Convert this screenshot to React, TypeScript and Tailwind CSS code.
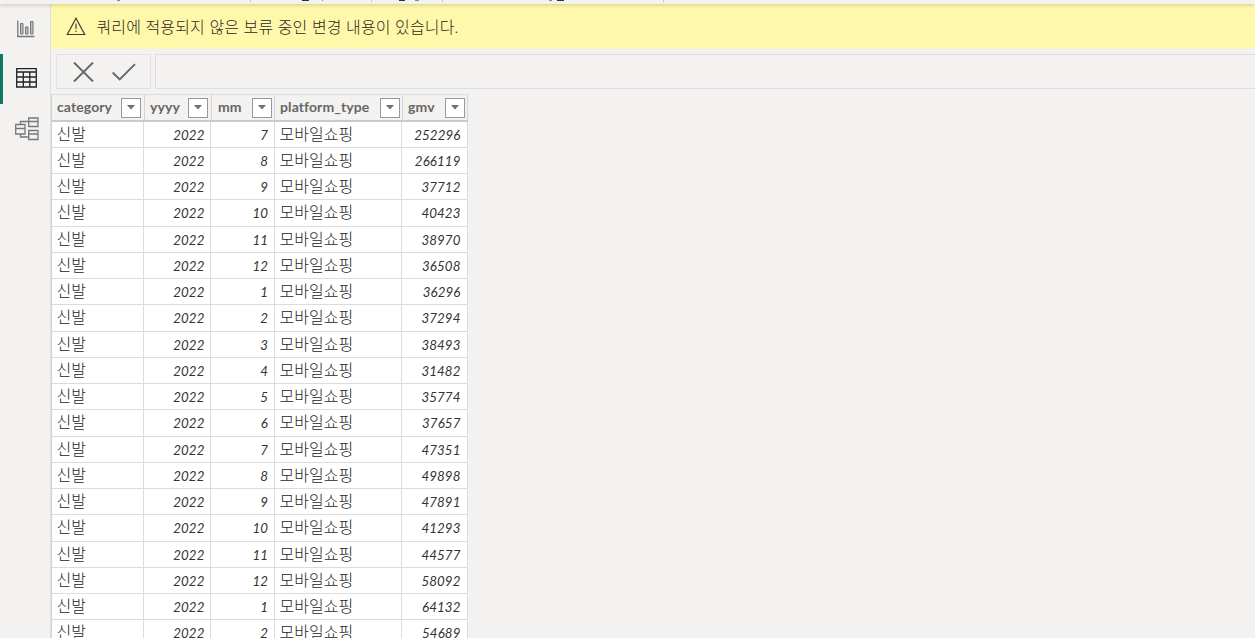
import { useState } from "react";

const ROWS: [number, number][] = [
  [7, 252296],
  [8, 266119],
  [9, 37712],
  [10, 40423],
  [11, 38970],
  [12, 36508],
  [1, 36296],
  [2, 37294],
  [3, 38493],
  [4, 31482],
  [5, 35774],
  [6, 37657],
  [7, 47351],
  [8, 49898],
  [9, 47891],
  [10, 41293],
  [11, 44577],
  [12, 58092],
  [1, 64132],
  [2, 54689],
];

const COLUMNS = [
  { name: "category", width: "w-[93px]", pad: "pl-[5px] pr-[3px]" },
  { name: "yyyy", width: "w-[67px]", pad: "pl-[5px] pr-[3px]" },
  { name: "mm", width: "w-[63px]", pad: "pl-[6px] pr-[2px]" },
  { name: "platform_type", width: "w-[128px]", pad: "pl-[5px] pr-[2px]" },
  { name: "gmv", width: "w-[65px]", pad: "pl-[5px] pr-[2px]" },
];

const CELL = "shrink-0 border-r border-b border-[#dcdcdc]";
const TEXT_CELL = "pl-[4.5px] pt-[1px] text-[16px] leading-[22px] font-light text-[#252525]";
const NUM_CELL = "pt-[2px] text-right text-[13.3px] leading-[22px] tracking-[0.1px] italic text-[#333]";

function ReportIcon() {
  return (
    <svg width="18" height="18" viewBox="0 0 18 18" fill="none" stroke="#777" strokeWidth="1">
      <path d="M.8.500v16h16.700" strokeWidth="1.300" />
      <path d="M3.500 3.500h2.500v10.500h-2.500zM8.500 7h2.500v7h-2.500zM13.500 1.500h2.500v12.500h-2.500z" fill="#bbb" />
    </svg>
  );
}

function TableIcon() {
  return (
    <svg className="-mt-[2px]" width="21" height="20" viewBox="0 0 21 20" fill="none" stroke="#222" strokeWidth="1.300">
      <path d="M.7.7h19.600v18.300H.7zM.7 4h19.600M.7 9h19.600M.7 14h19.600M7.300 4v15M13.800 4v15" />
    </svg>
  );
}

function ModelIcon() {
  return (
    <svg className="-mt-px ml-px" width="24" height="24" viewBox="0 0 24 24" fill="none" stroke="#777" strokeWidth="1.300">
      <path d="M.7 7.500h9.300v9.500H.7zM.7 11.500h9.300M13.700 1h9.300v8.500h-9.300zM13.700 4.500h9.300M13.700 13.500h9.300v9h-9.300zM13.700 17h9.300M5.500 7.500v-3h8.200M5.500 17v3h8.200" />
    </svg>
  );
}

export default function App() {
  const [view, setView] = useState(1);
  const icons = [<ReportIcon />, <TableIcon />, <ModelIcon />];

  return (
    <div className="flex h-[638px] w-[1255px] flex-col overflow-hidden bg-[#f3f2f1] font-['Lato','Noto_Sans_CJK_KR',sans-serif]">
      <header className="relative z-10 h-1 shrink-0 bg-[#f3f2f1] shadow-[0_1px_4px_rgba(0,0,0,0.2)]">
        {/* lower edge of the ribbon: group dividers and label ends */}
        <svg className="block" width="700" height="4" viewBox="0 0 700 4">
          <path d="M250 0h1v2h-1zM371 0h1v2h-1zM442 0h1v2h-1zM663 0h1v2h-1z" fill="#c4c4c4" />
          <path d="M117 0h3v1h-3zM322 0h1v1h-1zM415 0h4v1h-4zM549 0h3v1h-3z" fill="#888" />
          <path d="M302 0h7v1h-7zM399 0h6v1h-6zM557 0h7v1h-7z" fill="#333" />
        </svg>
      </header>
      <div className="flex min-h-0 flex-1">
        <nav className="flex w-[51px] shrink-0 flex-col border-r border-[#e1dfdd]">
          {icons.map((icon, i) => (
            <button
              key={i}
              onClick={() => setView(i)}
              className={`flex h-[50px] w-full items-center justify-center border-l-[3px] pr-px ${
                view === i ? "border-[#117865]" : "border-transparent"
              }`}
            >
              {icon}
            </button>
          ))}
        </nav>
        <main className="flex min-w-0 flex-1 flex-col">
          <div className="flex h-[46px] shrink-0 items-center border-b-2 border-[#f8efdc] bg-[#fff8ab] pt-px pl-[15px]">
            <svg width="20" height="19" viewBox="0 0 20 19" fill="none" stroke="#44412c" strokeWidth="1.200">
              <path d="M10 1.200 18.700 17.500H1.300zM10 6.500v5.500M10 13.500v1.500" />
            </svg>
            <span className="mt-px ml-[10.5px] text-[16px] font-light tracking-[0.13px] whitespace-nowrap text-[#2b2918]">
              쿼리에 적용되지 않은 보류 중인 변경 내용이 있습니다.
            </span>
          </div>
          <div className="mt-[4px] ml-[5px] flex h-[35px] shrink-0">
            <div className="flex w-[95px] items-center border border-[#e1e0e2] pl-[16px]">
              <svg width="22" height="20" viewBox="0 0 22 20" fill="none" stroke="#666" strokeWidth="1.900">
                <path d="M1 .5 20 19.500M20 .5 1 19.500" />
              </svg>
              <svg className="ml-[17px]" width="24" height="18" viewBox="0 0 24 18" fill="none" stroke="#666" strokeWidth="1.900">
                <path d="m.7 9.500 7 7L23 1.200" />
              </svg>
            </div>
            <div className="ml-1 flex-1 border-y border-l border-[#dddde0]" />
          </div>
          <div className="mt-[5px] w-[417px] border-l border-[#d4d4d4]">
            <div className="flex h-[28px] border-t border-b-2 border-t-[#dcdcdc] border-b-[#cacaca] bg-[#f3f2f1]">
              {COLUMNS.map((col) => (
                <div
                  key={col.name}
                  className={`flex shrink-0 items-center border-r border-[#d4d4d4] ${col.width} ${col.pad}`}
                >
                  <span className="-mt-[2px] text-[14px] leading-5 font-bold tracking-[0.1px] text-[#666]">
                    {col.name}
                  </span>
                  <button className="ml-auto flex h-5 w-5 shrink-0 items-center justify-center border border-[#999] bg-white">
                    <svg width="8" height="5" viewBox="0 0 8 5">
                      <path d="M0 0h8L4 4.500z" fill="#707070" />
                    </svg>
                  </button>
                </div>
              ))}
            </div>
            <div className="-mt-[0.5px]">
              {ROWS.map(([month, gmv], i) => (
                <div key={i} className="flex h-[26.25px] w-[416px] bg-white">
                  <div className={`w-[92px] ${CELL} ${TEXT_CELL}`}>신발</div>
                  <div className={`w-[67px] pr-[5.5px] ${CELL} ${NUM_CELL}`}>2022</div>
                  <div className={`w-[64px] pr-[6px] ${CELL} ${NUM_CELL}`}>{month}</div>
                  <div className={`w-[127px] ${CELL} ${TEXT_CELL}`}>모바일쇼핑</div>
                  <div className={`w-[66px] pr-[6.5px] ${CELL} ${NUM_CELL}`}>{gmv}</div>
                </div>
              ))}
            </div>
          </div>
        </main>
      </div>
    </div>
  );
}
